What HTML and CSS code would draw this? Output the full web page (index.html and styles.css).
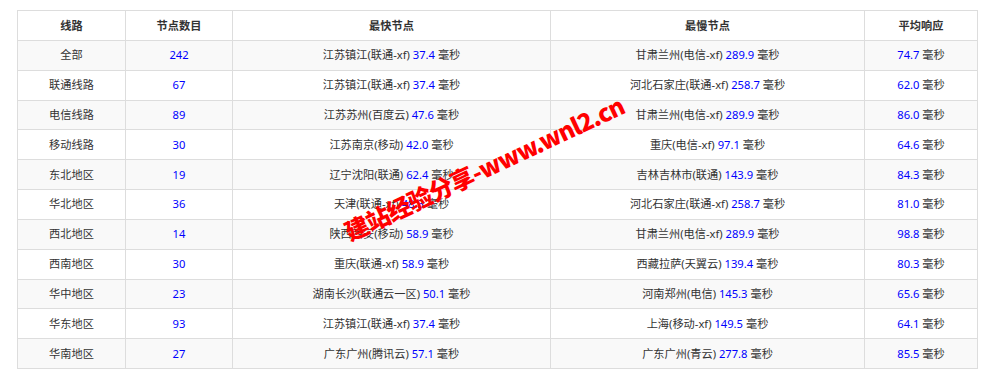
FILE: index.html
```html
<!DOCTYPE html>
<html lang="zh-CN">
<head>
<meta charset="utf-8">
<title>线路节点</title>
<link rel="stylesheet" href="styles.css">
</head>
<body>
<div class="wrap">
  <table class="speed">
    <colgroup>
      <col class="c1"><col class="c2"><col class="c3"><col class="c4"><col class="c5">
    </colgroup>
    <thead>
      <tr><th>线路</th><th>节点数目</th><th>最快节点</th><th>最慢节点</th><th>平均响应</th></tr>
    </thead>
    <tbody>
      <tr><td>全部</td><td><span class="n">242</span></td><td>江苏镇江(联通-xf) <span class="n">37.4</span> 毫秒</td><td>甘肃兰州(电信-xf) <span class="n">289.9</span> 毫秒</td><td><span class="n">74.7</span> 毫秒</td></tr>
      <tr><td>联通线路</td><td><span class="n">67</span></td><td>江苏镇江(联通-xf) <span class="n">37.4</span> 毫秒</td><td>河北石家庄(联通-xf) <span class="n">258.7</span> 毫秒</td><td><span class="n">62.0</span> 毫秒</td></tr>
      <tr><td>电信线路</td><td><span class="n">89</span></td><td>江苏苏州(百度云) <span class="n">47.6</span> 毫秒</td><td>甘肃兰州(电信-xf) <span class="n">289.9</span> 毫秒</td><td><span class="n">86.0</span> 毫秒</td></tr>
      <tr><td>移动线路</td><td><span class="n">30</span></td><td>江苏南京(移动) <span class="n">42.0</span> 毫秒</td><td>重庆(电信-xf) <span class="n">97.1</span> 毫秒</td><td><span class="n">64.6</span> 毫秒</td></tr>
      <tr><td>东北地区</td><td><span class="n">19</span></td><td>辽宁沈阳(联通) <span class="n">62.4</span> 毫秒</td><td>吉林吉林市(联通) <span class="n">143.9</span> 毫秒</td><td><span class="n">84.3</span> 毫秒</td></tr>
      <tr><td>华北地区</td><td><span class="n">36</span></td><td>天津(联通-xf) <span class="n">48.3</span> 毫秒</td><td>河北石家庄(联通-xf) <span class="n">258.7</span> 毫秒</td><td><span class="n">81.0</span> 毫秒</td></tr>
      <tr><td>西北地区</td><td><span class="n">14</span></td><td>陕西西安(移动) <span class="n">58.9</span> 毫秒</td><td>甘肃兰州(电信-xf) <span class="n">289.9</span> 毫秒</td><td><span class="n">98.8</span> 毫秒</td></tr>
      <tr><td>西南地区</td><td><span class="n">30</span></td><td>重庆(联通-xf) <span class="n">58.9</span> 毫秒</td><td>西藏拉萨(天翼云) <span class="n">139.4</span> 毫秒</td><td><span class="n">80.3</span> 毫秒</td></tr>
      <tr><td>华中地区</td><td><span class="n">23</span></td><td>湖南长沙(联通云一区) <span class="n">50.1</span> 毫秒</td><td>河南郑州(电信) <span class="n">145.3</span> 毫秒</td><td><span class="n">65.6</span> 毫秒</td></tr>
      <tr><td>华东地区</td><td><span class="n">93</span></td><td>江苏镇江(联通-xf) <span class="n">37.4</span> 毫秒</td><td>上海(移动-xf) <span class="n">149.5</span> 毫秒</td><td><span class="n">64.1</span> 毫秒</td></tr>
      <tr><td>华南地区</td><td><span class="n">27</span></td><td>广东广州(腾讯云) <span class="n">57.1</span> 毫秒</td><td>广东广州(青云) <span class="n">277.8</span> 毫秒</td><td><span class="n">85.5</span> 毫秒</td></tr>
    </tbody>
  </table>
  <div class="watermark">建站经验分享-www.wnl2.cn</div>
</div>
</body>
</html>
```

FILE: styles.css
```css
html, body {
  margin: 0;
  padding: 0;
  background: #fff;
}
body {
  font-family: "Noto Sans", "Noto Sans CJK SC", sans-serif;
  color: #333;
}
.wrap {
  position: relative;
  padding: 10px 0 0 17px;
}
.speed {
  border-collapse: collapse;
  table-layout: fixed;
  width: 960px;
  font-size: 11.2px;
}
.c1 { width: 108px; }
.c2 { width: 107px; }
.c3 { width: 318px; }
.c4 { width: 314px; }
.c5 { width: 113px; }
.speed th,
.speed td {
  border: 1px solid #ddd;
  text-align: center;
  padding: 0;
  line-height: 14px;
  white-space: nowrap;
}
.speed thead tr { height: 30px; }
.speed tbody tr { height: 29.82px; }
.speed th {
  font-weight: bold;
  color: #333;
}
.speed tbody tr:nth-child(odd) { background: #f9f9f9; }
.n { color: #0000ff; }
.watermark {
  position: absolute;
  left: 484px;
  top: 168px;
  transform: translate(-50%, -50%) rotate(-25deg);
  color: #ff0000;
  font-family: "Noto Sans CJK SC", "Noto Sans", sans-serif;
  font-weight: 900;
  font-size: 24px;
  line-height: 28px;
  white-space: nowrap;
  letter-spacing: -0.8px;
}
```
